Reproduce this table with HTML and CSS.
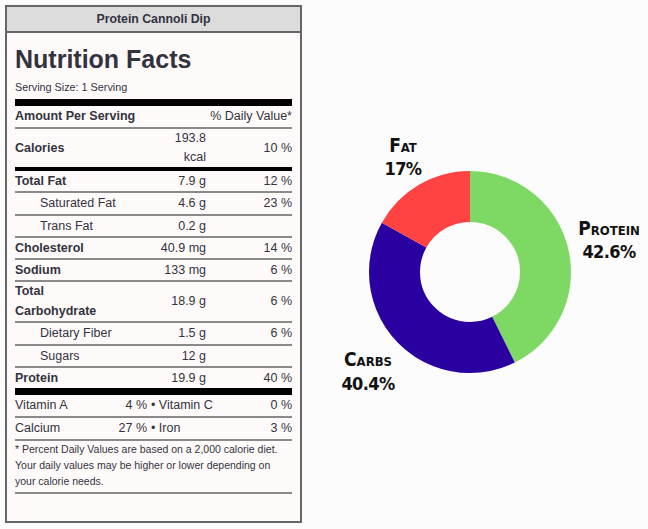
FILE: index.html
```html
<!DOCTYPE html>
<html>
<head>
<meta charset="utf-8">
<link rel="stylesheet" href="styles.css">
</head>
<body>
<div class="page">
  <div class="card">
    <div class="card-head">Protein Cannoli Dip</div>
    <div class="card-body">
      <h1 class="title">Nutrition Facts</h1>
      <div class="serving">Serving Size: 1 Serving</div>
      <div class="bar-thick top-bar"></div>
      <div class="row head-row"><span class="b">Amount Per Serving</span><span class="pct">% Daily Value*</span></div>
      <div class="row cal-row"><span class="lbl b">Calories</span><span class="val cal-val">193.8<br>kcal</span><span class="pct">10 %</span></div>
      <div class="bar-mid"></div>
      <div class="row"><span class="lbl b">Total Fat</span><span class="val">7.9 g</span><span class="pct">12 %</span></div>
      <div class="row"><span class="lbl sub">Saturated Fat</span><span class="val">4.6 g</span><span class="pct">23 %</span></div>
      <div class="row"><span class="lbl sub">Trans Fat</span><span class="val">0.2 g</span><span class="pct"></span></div>
      <div class="row"><span class="lbl b">Cholesterol</span><span class="val">40.9 mg</span><span class="pct">14 %</span></div>
      <div class="row"><span class="lbl b">Sodium</span><span class="val">133 mg</span><span class="pct">6 %</span></div>
      <div class="row carb-row"><span class="lbl b">Total Carbohydrate</span><span class="val">18.9 g</span><span class="pct">6 %</span></div>
      <div class="row"><span class="lbl sub">Dietary Fiber</span><span class="val">1.5 g</span><span class="pct">6 %</span></div>
      <div class="row"><span class="lbl sub">Sugars</span><span class="val">12 g</span><span class="pct"></span></div>
      <div class="row last"><span class="lbl b">Protein</span><span class="val">19.9 g</span><span class="pct">40 %</span></div>
      <div class="bar-thick"></div>
      <div class="vrow"><span>Vitamin A</span><span class="vv">4 %</span><span class="vn">• Vitamin C</span><span class="pct">0 %</span></div>
      <div class="vrow"><span>Calcium</span><span class="vv">27 %</span><span class="vn">• Iron</span><span class="pct">3 %</span></div>
      <p class="foot">* Percent Daily Values are based on a 2,000 calorie diet. Your daily values may be higher or lower depending on your calorie needs.</p>
    </div>
  </div>
  <svg class="chart" width="346" height="529" viewBox="0 0 346 529">
    <g transform="rotate(-90 168 272)">
      <circle cx="168" cy="272" r="75.5" fill="none" stroke="#7ed864" stroke-width="51" stroke-dasharray="202.09 474.38" stroke-dashoffset="0"/>
      <circle cx="168" cy="272" r="75.5" fill="none" stroke="#2a00a0" stroke-width="51" stroke-dasharray="191.65 474.38" stroke-dashoffset="-202.09"/>
      <circle cx="168" cy="272" r="75.5" fill="none" stroke="#ff4242" stroke-width="51" stroke-dasharray="80.64 474.38" stroke-dashoffset="-393.74"/>
    </g>
    <g class="lab">
      <text x="101" y="152">Fat</text>
      <text class="num" x="101" y="175">17%</text>
      <text x="307" y="235">Protein</text>
      <text class="num" x="307" y="258">42.6%</text>
      <text x="66" y="366">Carbs</text>
      <text class="num" x="66" y="390">40.4%</text>
    </g>
  </svg>
</div>
</body>
</html>
```

FILE: styles.css
```css
html, body {
  margin: 0;
  padding: 0;
  background: #fdfcfc;
}
.page {
  display: flex;
  align-items: flex-start;
  width: 648px;
  height: 529px;
  font-family: "Liberation Sans", Arial, sans-serif;
  color: #333340;
}
.card {
  margin: 5px 0 0 5px;
  width: 293px;
  border: 2px solid #666;
  background: #fffafa;
}
.card-head {
  height: 24px;
  line-height: 24px;
  background: #dcdcdc;
  border-bottom: 2px solid #666;
  text-align: center;
  font-weight: bold;
  font-size: 12.3px;
}
.card-body {
  padding: 11px 8px 27px 8px;
}
.title {
  margin: 0;
  font-size: 25px;
  line-height: 30px;
  font-weight: bold;
}
.serving {
  font-size: 10.8px;
  line-height: 14px;
  margin-top: 6px;
}
.bar-thick {
  height: 7px;
  background: #000;
}
.top-bar { margin-top: 5px; }
.bar-mid {
  height: 4px;
  background: #000;
}
.row {
  display: grid;
  grid-template-columns: 105px 1fr 86px;
  font-size: 12.5px;
  line-height: 20.25px;
  border-bottom: 2px solid #8a8a8a;
  align-items: center;
}
.row.last { border-bottom: none; }
.head-row {
  grid-template-columns: 1fr auto;
  line-height: 21px;
}
.cal-row { border-bottom: none; }
.cal-val { line-height: 19px; }
.carb-row { line-height: 19.5px; }
.b { font-weight: bold; }
.sub { padding-left: 25px; }
.val { text-align: right; }
.pct { text-align: right; }
.vrow {
  display: grid;
  grid-template-columns: 100px 32px 1fr auto;
  font-size: 12.5px;
  line-height: 21px;
  border-bottom: 2px solid #8a8a8a;
}
.vv { text-align: right; }
.vn { padding-left: 4px; }
.foot {
  margin: 0;
  padding: 0 0 3px 0;
  font-size: 10.5px;
  line-height: 16px;
  border-bottom: 2px solid #8a8a8a;
}
.chart { display: block; }
.lab text {
  font-family: "DejaVu Sans Condensed", "DejaVu Sans", sans-serif;
  font-weight: bold;
  font-variant: small-caps;
  font-size: 19px;
  fill: #111;
  text-anchor: middle;
}
.lab text.num {
  font-size: 18px;
  letter-spacing: -0.6px;
}
```
